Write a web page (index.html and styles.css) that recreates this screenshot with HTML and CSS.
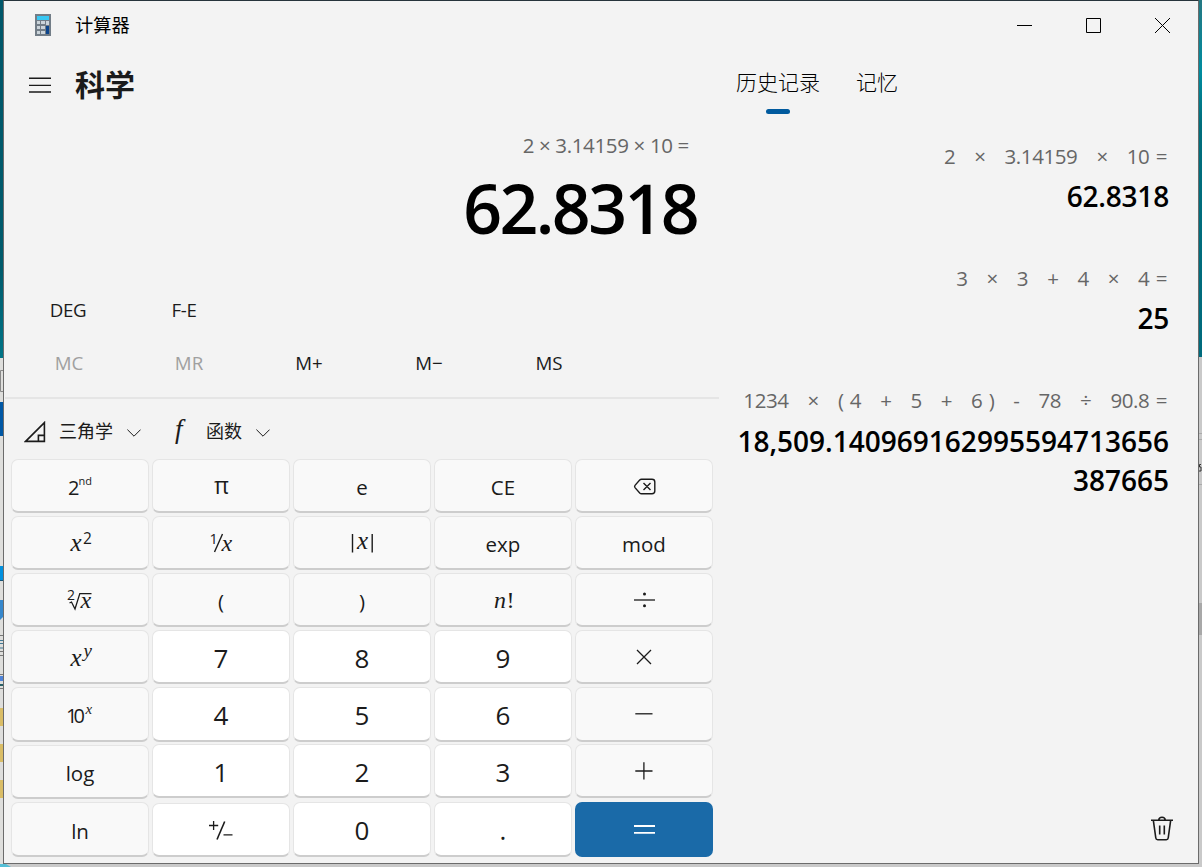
FILE: index.html
```html
<!DOCTYPE html>
<html lang="zh-CN">
<head>
<meta charset="utf-8">
<title>计算器</title>
<link rel="stylesheet" href="styles.css">
</head>
<body>
<div class="desktop">
  <svg class="backdrop" width="1202" height="867" viewBox="0 0 1202 867">
    <defs>
      <linearGradient id="sea-l" x1="0" y1="0" x2="0" y2="1"><stop offset="0" stop-color="#00576a"/><stop offset=".75" stop-color="#005b6c"/><stop offset="1" stop-color="#007487"/></linearGradient>
      <linearGradient id="sea-r" x1="0" y1="0" x2="0" y2="1"><stop offset="0" stop-color="#257883"/><stop offset=".2" stop-color="#008c9f"/><stop offset=".35" stop-color="#006e7c"/><stop offset="1" stop-color="#006b7d"/></linearGradient>
    </defs>
    <rect width="1202" height="867" fill="#c9c9c9"/>
    <rect width="4" height="358" fill="url(#sea-l)"/>
    <rect y="358" width="4" height="506" fill="#dededc"/>
    <path d="M4 370.5H.5V391.5H4" fill="none" stroke="#888"/>
    <rect y="402" width="4" height="34" fill="#0058a5"/>
    <rect y="566" width="4" height="15" fill="#0090df"/><rect y="580" width="4" height="1" fill="#145377"/>
    <path d="M0 600H4V616L0 620Z" fill="#3587cc"/>
    <path d="M0 635.5H4M0 651.5H4M0 655.5H4M0 674.5H4M0 688.5H4" stroke="#777"/>
    <path d="M0 640.5H4M0 643.5H4M0 648H4" stroke="#3e7895"/>
    <rect y="676" width="4" height="5" fill="#4e83d8"/><rect y="684" width="4" height="2" fill="#285f66"/>
    <path d="M0 708H4V726H0ZM0 744H4V762H0ZM0 780H4V798H0Z" fill="#dabd66"/>
    <path d="M0 864H6L11 867H0Z" fill="#55bfd6"/>
    <rect x="1199" width="3" height="357" fill="url(#sea-r)"/>
    <path d="M1199 433.5H1202M1199 439.5H1202M1199 484.5H1202" stroke="#aaa"/>
    <path d="M1201 464.5H1199.5V467H1201V471H1199" fill="none" stroke="#333"/>
    <rect x="1199" y="603" width="3" height="32" fill="#a8a8a8"/>
  </svg>

  <div class="window">
    <header class="titlebar">
      <svg class="app-icon" width="16" height="22" viewBox="0 0 16 22">
        <rect width="16" height="22" fill="#727d87"/><rect x="2" y="2" width="12" height="4" fill="#38c8f4"/>
        <path d="M2 7h3v3H2zM6 7h4v3H6zM11 7h3v4h-3zM2 12h3v3H2zM6 12h4v3H6zM2 17h3v3H2zM6 17h4v3H6z" fill="#cbd4da"/>
        <rect x="11" y="12" width="3" height="8" fill="#0c458c"/>
      </svg>
      <span class="app-name">计算器</span>
      <div class="controls">
        <svg class="line" width="15" height="16" viewBox="0 0 15 16"><path d="M0 8.5H15"/></svg>
        <svg class="line" width="15" height="16" viewBox="0 0 15 16"><path d="M.5 1.5H14.5V15.5H.5Z"/></svg>
        <svg class="line" width="15" height="16" viewBox="0 0 15 16"><path d="M0 1L15 16M15 1L0 16"/></svg>
      </div>
    </header>

    <div class="body">
      <main class="calc">
        <div class="mode">
          <svg class="line menu-icon" width="22" height="18" viewBox="0 0 22 18"><path d="M0 2.2H22M0 9.4H22M0 16H22"/></svg>
          <h1>科学</h1>
        </div>
        <div class="expression">2 × 3.14159 × 10 =</div>
        <div class="result">62.8318</div>
        <div class="toggles"><span class="deg">DEG</span><span class="fe">F-E</span></div>
        <div class="memory"><span class="off">MC</span><span class="off">MR</span><span>M+</span><span>M−</span><span>MS</span></div>
        <div class="menus">
          <svg class="line tri" width="22" height="22" viewBox="0 0 22 22"><path d="M1.6 20.4H20.4V1.6ZM14.4 20V14.4H20"/></svg>
          <span class="trig">三角学</span>
          <svg class="line chev" width="14" height="8" viewBox="0 0 14 8"><path d="M.4 .6L7 7.2L13.6 .6"/></svg>
          <span class="fn-icon">f</span>
          <span class="func">函数</span>
          <svg class="line chev" width="14" height="8" viewBox="0 0 14 8"><path d="M.4 .6L7 7.2L13.6 .6"/></svg>
        </div>
        <div class="keys">
          <button class="key"><svg width="138" height="54"><text class="ui" x="57" y="36" font-size="20">2</text><text class="ui" x="67.5" y="26" font-size="11">nd</text></svg></button>
          <button class="key"><svg width="138" height="54"><text class="ui" x="62" y="34.5" font-size="23">π</text></svg></button>
          <button class="key">e</button>
          <button class="key ce">CE</button>
          <button class="key"><svg width="138" height="54"><path d="M66.5 20.3H77Q79.8 20.3 79.8 23V32Q79.8 34.7 77 34.7H66.5Q65.5 34.7 64.7 33.9L60 28.6Q59.2 27.5 60 26.4L64.7 21.1Q65.5 20.3 66.5 20.3ZM68.5 24L75.5 31M75.5 24L68.5 31" stroke-width="1.4"/></svg></button>

          <button class="key"><svg width="138" height="54"><text class="math" x="59.5" y="35" font-size="25">x</text><text class="ui" x="72" y="28" font-size="15.5">2</text></svg></button>
          <button class="key"><svg width="138" height="54"><text class="ui" x="57.5" y="27.5" font-size="14.5">1</text><path d="M62.5 36L70.5 18" stroke-width="1.4"/><text class="math" x="69.5" y="35" font-size="24">x</text></svg></button>
          <button class="key"><svg width="138" height="54"><path d="M59.5 18V36.5M79.2 18V36.5" stroke-width="1.4"/><text class="math" x="64" y="33" font-size="25">x</text></svg></button>
          <button class="key">exp</button>
          <button class="key">mod</button>

          <button class="key"><svg width="138" height="54"><text class="ui" x="56" y="27" font-size="14">2</text><path d="M58.5 30L60.5 29L64 36L68.8 20.6H80.5" stroke-width="1.3"/><text class="math" x="69.5" y="34.5" font-size="24">x</text></svg></button>
          <button class="key paren">(</button>
          <button class="key paren">)</button>
          <button class="key"><svg width="138" height="54"><text class="math" x="60" y="35" font-size="24">n</text><text class="serif" x="72.5" y="35" font-size="24">!</text></svg></button>
          <button class="key"><svg width="138" height="54"><path d="M59 27H80" stroke-width="1.3"/><circle cx="69.5" cy="21" r="1.5"/><circle cx="69.5" cy="32.7" r="1.5"/></svg></button>

          <button class="key"><svg width="138" height="54"><text class="math" x="59.5" y="35.5" font-size="25">x</text><text class="math" x="72.5" y="26.5" font-size="19">y</text></svg></button>
          <button class="key num">7</button><button class="key num">8</button><button class="key num">9</button>
          <button class="key"><svg width="138" height="54"><path d="M62 20L76 34M76 20L62 34" stroke-width="1.3"/></svg></button>

          <button class="key"><svg width="138" height="54"><text class="ui" x="55" y="35.5" font-size="20" textLength="19">10</text><text class="math" x="74.5" y="26.5" font-size="15">x</text></svg></button>
          <button class="key num">4</button><button class="key num">5</button><button class="key num">6</button>
          <button class="key"><svg width="138" height="54"><path d="M60.3 26.8H77.5" stroke-width="1.3"/></svg></button>

          <button class="key">log</button>
          <button class="key num up">1</button><button class="key num up">2</button><button class="key num up">3</button>
          <button class="key up"><svg width="138" height="54"><path d="M60.3 27H77.5M68.9 18.3V35.5" stroke-width="1.3"/></svg></button>

          <button class="key">ln</button>
          <button class="key num last"><svg width="138" height="54"><path d="M57 22.5H66.2M61.6 18V27M71.5 31.8H80.5" stroke-width="1.3"/><path d="M65 36.5L72.7 18.5" stroke-width="1.6"/></svg></button>
          <button class="key num">0</button><button class="key num">.</button>
          <button class="key equals"><svg width="138" height="55"><path d="M59 24H80M59 30.8H80" stroke-width="1.8"/></svg></button>
        </div>
      </main>

      <aside class="history">
        <nav class="tabs"><span class="tab active">历史记录</span><span class="tab">记忆</span></nav>
        <section class="entry"><div class="past">2 &nbsp; × &nbsp; 3.14159 &nbsp; × &nbsp; 10 =</div><div class="value short">62.8318</div></section>
        <section class="entry"><div class="past">3 &nbsp; × &nbsp; 3 &nbsp; + &nbsp; 4 &nbsp; × &nbsp; 4 =</div><div class="value short">25</div></section>
        <section class="entry"><div class="past">1234 &nbsp; × &nbsp; ( 4 &nbsp; + &nbsp; 5 &nbsp; + &nbsp; 6 ) &nbsp; - &nbsp; 78 &nbsp; ÷ &nbsp; 90.8 =</div><div class="value">18,509.140969162995594713656<br>387665</div></section>
        <svg class="line trash" width="22" height="25" viewBox="0 0 22 25"><path d="M0 4.2H22M2.3 4.2L4.8 22Q5 23.7 6.7 23.7H15.3Q17 23.7 17.2 22L19.7 4.2M7.7 4Q8 1.2 11 1.2T14.3 4M8.7 9.5V18.5M13.3 9.5V18.5"/></svg>
      </aside>
    </div>
  </div>
</div>
</body>
</html>
```
FILE: styles.css
```css
* { box-sizing: border-box; }
body {
  margin: 0;
  color: #1b1b1b;
  font-family: "Open Sans", "Noto Sans CJK SC", sans-serif;
}
svg { display: block; }
.line path, .key path { fill: none; stroke: #1b1b1b; }
.desktop { position: relative; width: 1202px; height: 867px; overflow: hidden; }
.backdrop { position: absolute; left: 0; top: 0; }
.window {
  position: absolute; left: 3px; top: 0;
  width: 1196px; height: 864px;
  display: flex; flex-direction: column;
  background: #f3f3f3;
  border: 1px solid #6b6b6b;
  border-top-color: #26343b;
}

.titlebar { display: flex; align-items: center; height: 48px; padding: 0 28px 0 31px; }
.app-name { margin-left: 24px; font-size: 18.2px; line-height: 26px; color: #000; }
.controls { display: flex; gap: 54px; margin-left: auto; }
.controls path { stroke: #000; }

.body { display: flex; flex: 1; }
.calc { width: 715px; }
.mode { display: flex; align-items: center; height: 71px; padding: 0 0 0 25px; }
.mode h1 { margin: 0 0 0 24px; font-size: 30px; line-height: 44px; font-weight: 700; }
.menu-icon path { stroke-width: 1.4; }
.expression {
  height: 50px; padding-right: 30px;
  font-size: 20.5px; line-height: 50px; text-align: right;
  color: #666; letter-spacing: -0.35px;
}
.result {
  height: 79px; padding-right: 22px;
  font-size: 68px; line-height: 76px; font-weight: 600;
  color: #000; text-align: right; letter-spacing: -2.6px;
}
.toggles, .memory { display: grid; grid-template-columns: repeat(5, 120px); font-size: 18.7px; text-align: center; }
.toggles { height: 87px; padding: 35px 0 0 4px; line-height: 52px; letter-spacing: -0.3px; }
.fe { margin-left: -8px; }
.memory { height: 63px; line-height: 54px; border-bottom: 2px solid #e5e5e5; margin-left: 1px; padding-left: 4px; }
.off { color: #a0a0a0; }
.menus { display: flex; align-items: center; height: 60px; padding: 5px 0 0 20px; font-size: 18px; }
.tri path { stroke-width: 1.6; }
.trig { margin: -4px 0 0 13px; }
.chev { margin: 3px 0 0 14px; }
.fn-icon { margin: -5px 0 0 34px; width: 16px; font: italic 27px/30px "Liberation Serif", serif; }
.func { margin: -4px 0 0 15px; }

.keys {
  display: grid;
  grid-template-columns: repeat(5, 138px);
  grid-template-rows: 54px 54px 54px 54px 55px 54px 55px;
  gap: 3px;
  margin: 0 0 0 7px;
}
.key {
  margin: 0; padding: 3px 0 0;
  border: 1px solid #e5e5e5;
  border-bottom: 2px solid #cdcdcd;
  border-radius: 7px;
  background: #f9f9f9;
  color: #1b1b1b;
  font: 20.5px/48px "Open Sans", sans-serif;
  text-align: center;
}
.key:has(svg) { padding: 0; }
.key svg { margin: -1px; }
.key circle { fill: #1b1b1b; }
.num { background: #fff; font-size: 26px; padding-top: 2px; }
.up { margin-top: -1px; margin-bottom: 1px; }
.last { margin-top: 1px; }
.equals { background: #1a6aa8; border: 0; }
.equals svg { margin: 0; }
.equals path { stroke: #fff; }
.ui { font-family: "Open Sans", sans-serif; fill: #1b1b1b; }
.math { font-family: "Liberation Serif", serif; font-style: italic; fill: #1b1b1b; }
.serif { font-family: "Liberation Serif", serif; fill: #1b1b1b; }

.history { flex: 1; display: flex; flex-direction: column; padding-right: 29px; }
.tabs { display: flex; gap: 36px; height: 65px; padding: 15px 0 0 17px; margin-bottom: 26px; }
.tab { font-size: 21px; line-height: 36px; font-weight: 300; color: #000; }
.active::after { content: ""; display: block; width: 24px; height: 5px; margin: 9px auto 0; border-radius: 3px; background: #005a9e; }
.entry { text-align: right; height: 122px; }
.past { height: 32px; padding-right: 2px; font-size: 20.5px; line-height: 32px; color: #666; white-space: nowrap; letter-spacing: -0.4px; word-spacing: 1.4px; }
.value { padding-top: 6px; font-size: 28px; line-height: 39px; font-weight: 600; color: #000; letter-spacing: 0; }
.short { padding-top: 5px; letter-spacing: -0.2px; }
.trash { margin: auto -4px 22px auto; }
.trash path { stroke-width: 1.6; }
```
